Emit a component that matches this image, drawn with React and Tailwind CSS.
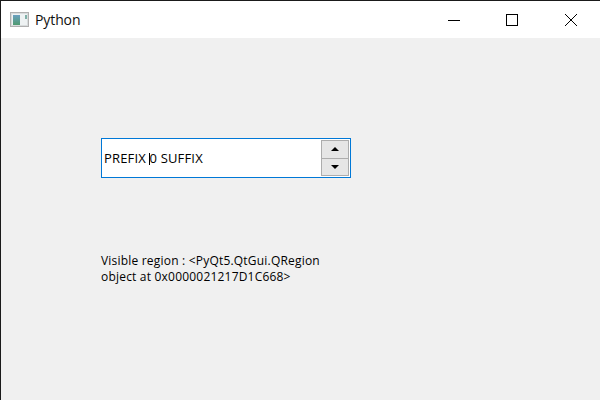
export default function App() {
  return (
    <div className="w-[600px] h-[400px] border-t border-l border-[#1a1a1a] bg-[#f0f0f0] flex flex-col overflow-hidden text-black" style={{ fontFamily: '"Open Sans", "Noto Sans", sans-serif' }}>
      <div className="h-[37px] bg-white flex items-center shrink-0">
        <svg className="ml-[9px]" width="20" height="16" viewBox="0 0 20 16">
          <defs>
            <linearGradient id="pane" x1="0" y1="0" x2="0" y2="1">
              <stop offset="0" stopColor="#6a9fc0" />
              <stop offset="1" stopColor="#4f9a70" />
            </linearGradient>
          </defs>
          <rect x="0.5" y="0.5" width="18" height="14" fill="#eef2f3" stroke="#b0b0b0" />
          <rect x="1.5" y="1.5" width="16" height="12" fill="none" stroke="#d8dcdd" />
          <rect x="3" y="3" width="7" height="10" fill="url(#pane)" />
          <rect x="15" y="3" width="2" height="4" fill="#7fb0a8" />
        </svg>
        <span className="ml-[5px] text-[14px] leading-[20px] tracking-[-0.1px] text-[#101010]">Python</span>
        <svg className="ml-auto" width="12" height="12" viewBox="0 0 12 12"><path d="M0 6.5H12" stroke="#000" /></svg>
        <svg className="ml-[46px]" width="12" height="12" viewBox="0 0 12 12" fill="none"><rect x="0.5" y="0.5" width="11" height="11" stroke="#000" /></svg>
        <svg className="ml-[47px] mr-[23px]" width="12" height="12" viewBox="0 0 12 12" fill="none"><path d="M0 0L12 12M12 0L0 12" stroke="#000" /></svg>
      </div>
      <div className="flex-1 flex flex-col pl-[100px] pt-[100px]">
        <div className="w-[250px] h-[40px] bg-white border border-[#0078d7] flex items-center justify-between pl-[2px] pr-px">
          <div className="relative text-[13px] tracking-[0.17px] leading-[18px] whitespace-nowrap">
            PREFIX 0 SUFFIX
            <span className="absolute left-[45px] top-[4px] w-px h-[12px] bg-black" />
          </div>
          <div className="w-[28px] h-[36px] flex flex-col">
            <div className="flex-1 bg-[#e6e6e6] border border-[#adadad] flex items-center justify-center">
              <svg width="8" height="4" viewBox="0 0 8 4"><path d="M4 0L8 4H0Z" fill="#000" /></svg>
            </div>
            <div className="flex-1 bg-[#e6e6e6] border border-[#adadad] border-t-0 flex items-center justify-center">
              <svg width="8" height="4" viewBox="0 0 8 4"><path d="M0 0H8L4 4Z" fill="#000" /></svg>
            </div>
          </div>
        </div>
        <div className="mt-[75px] w-[230px] text-[12px] tracking-[0.2px] leading-[16px]">
          Visible region : &lt;PyQt5.QtGui.QRegion object at 0x0000021217D1C668&gt;
        </div>
      </div>
    </div>
  );
}
